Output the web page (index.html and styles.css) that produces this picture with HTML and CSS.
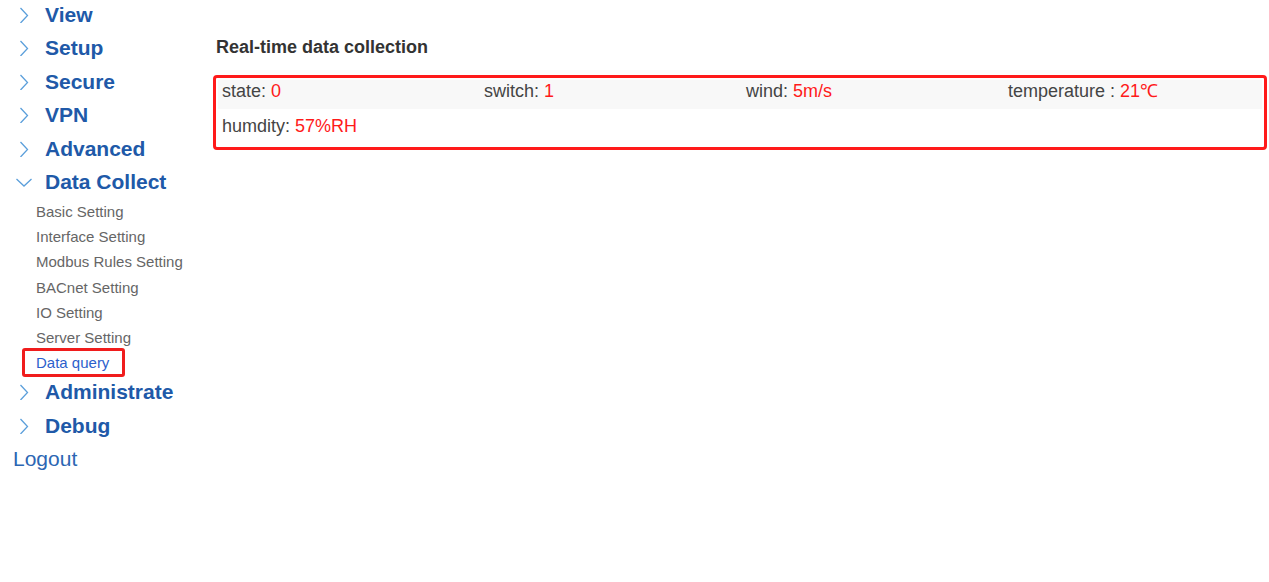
FILE: index.html
```html
<!DOCTYPE html>
<html lang="en">
<head>
    <meta charset="UTF-8">
    <meta name="viewport" content="width=device-width, initial-scale=1.0">
    <title>Data query</title>
    <link rel="stylesheet" href="styles.css">
</head>
<body>
    <div class="sidebar">
        <ul class="menu">
            <li class="menu-item"><svg class="chev" viewBox="0 0 16 16"><polyline points="4.5,1 11.5,8.5 4.5,16"/></svg><a href="#">View</a></li>
            <li class="menu-item"><svg class="chev" viewBox="0 0 16 16"><polyline points="4.5,1 11.5,8.5 4.5,16"/></svg><a href="#">Setup</a></li>
            <li class="menu-item"><svg class="chev" viewBox="0 0 16 16"><polyline points="4.5,1 11.5,8.5 4.5,16"/></svg><a href="#">Secure</a></li>
            <li class="menu-item"><svg class="chev" viewBox="0 0 16 16"><polyline points="4.5,1 11.5,8.5 4.5,16"/></svg><a href="#">VPN</a></li>
            <li class="menu-item"><svg class="chev" viewBox="0 0 16 16"><polyline points="4.5,1 11.5,8.5 4.5,16"/></svg><a href="#">Advanced</a></li>
            <li class="menu-item open"><svg class="chev" viewBox="0 0 16 16"><polyline points="0.5,5 8,12 15.5,5"/></svg><a href="#">Data Collect</a></li>
            <li>
                <ul class="submenu">
                    <li><a href="#">Basic Setting</a></li>
                    <li><a href="#">Interface Setting</a></li>
                    <li><a href="#">Modbus Rules Setting</a></li>
                    <li><a href="#">BACnet Setting</a></li>
                    <li><a href="#">IO Setting</a></li>
                    <li><a href="#">Server Setting</a></li>
                    <li><a href="#" class="active">Data query</a></li>
                </ul>
            </li>
            <li class="menu-item"><svg class="chev" viewBox="0 0 16 16"><polyline points="4.5,1 11.5,8.5 4.5,16"/></svg><a href="#">Administrate</a></li>
            <li class="menu-item"><svg class="chev" viewBox="0 0 16 16"><polyline points="4.5,1 11.5,8.5 4.5,16"/></svg><a href="#">Debug</a></li>
        </ul>
        <a href="#" class="logout">Logout</a>
    </div>

    <div class="content">
        <h2 class="title">Real-time data collection</h2>
        <div class="data-box">
            <div class="data-row odd">
                <div class="cell">state: <span class="val">0</span></div>
                <div class="cell">switch: <span class="val">1</span></div>
                <div class="cell">wind: <span class="val">5m/s</span></div>
                <div class="cell">temperature : <span class="val">21℃</span></div>
            </div>
            <div class="data-row">
                <div class="cell">humdity: <span class="val">57%RH</span></div>
            </div>
        </div>
    </div>
</body>
</html>
```

FILE: styles.css
```css
body {
    font-family: "Liberation Sans", Arial, sans-serif;
    margin: 0;
    background-color: white;
    display: flex;
    align-items: flex-start;
}

a {
    text-decoration: none;
}

.sidebar {
    width: 200px;
    padding-left: 13px;
    flex-shrink: 0;
}

.menu {
    list-style: none;
    margin: -2px 0 0 0;
    padding: 0;
}

.menu-item {
    display: flex;
    align-items: center;
    height: 33.5px;
    padding-left: 3px;
}

.menu-item a {
    color: #2059a8;
    font-size: 21px;
    font-weight: bold;
}

.chev {
    width: 16px;
    height: 16px;
    margin-right: 13px;
    fill: none;
    stroke: #5b9fdb;
    stroke-width: 1.3;
}

.submenu {
    list-style: none;
    margin: 0;
    padding: 0 0 0 23px;
}

.submenu li {
    height: 25.2px;
    line-height: 25.2px;
}

.submenu a {
    color: #666;
    font-size: 15px;
}

.submenu a.active {
    color: #2c5fcc;
    position: relative;
    display: inline-block;
}

/* highlight box around the current page */
.submenu a.active::after {
    content: "";
    position: absolute;
    left: -14px;
    right: -16px;
    top: -2px;
    bottom: -2px;
    border: 3px solid #f01c1c;
    border-radius: 3px;
}

.logout {
    display: block;
    color: #2c66b3;
    font-size: 21px;
    height: 33.5px;
    line-height: 33.5px;
}

.content {
    flex: 1;
    padding-right: 2px;
}

.title {
    font-size: 18px;
    font-weight: bold;
    color: #333;
    margin: 36px 0 17px 3px;
    line-height: 22px;
}

.data-box {
    border: 3px solid #ff1a1a;
    border-radius: 4px;
    padding: 2px;
}

.data-row {
    display: grid;
    grid-template-columns: 262px 262px 262px 1fr;
    padding: 7px 0 9px;
    line-height: 20px;
    font-size: 18px;
    color: #444;
}

.data-row.odd {
    background-color: #f8f8f8;
    padding: 1px 0 8px;
}

.cell {
    padding-left: 4px;
}

.val {
    color: #ff1a1a;
}
```
